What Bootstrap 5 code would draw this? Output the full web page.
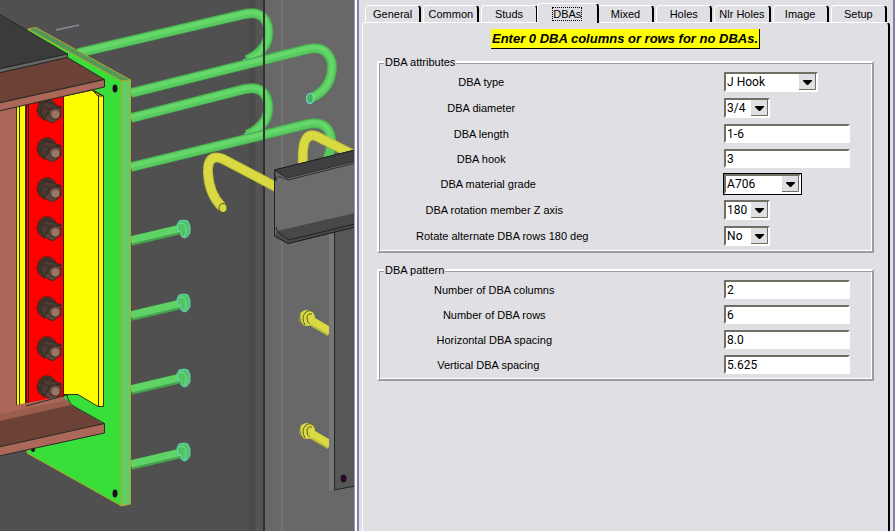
<!DOCTYPE html>
<html lang="en">
<head>
<meta charset="utf-8">
<meta name="viewport" content="width=device-width, initial-scale=1">
<title>DBA connection settings</title>
<link href="https://cdn.jsdelivr.net/npm/bootstrap@5.3.0/dist/css/bootstrap.min.css" rel="stylesheet">
<style>
  :root { --face: #e0dfe3; --shade: #9d9da1; --deep: #716f64; }
  body { background: var(--face); color: #000; font: 11px/14px "Liberation Sans", Arial, sans-serif; }
  .workspace { display: grid; grid-template-columns: 354fr 541fr; }
  .model-view { background: #505050; position: relative; }
  .model-view svg { position: absolute; width: 100%; height: 100%; display: block; }
  .side-panel { border-left: 1px solid #9a9ab4; padding-left: 2px; background: #fff; }
  .panel-body { background: var(--face); border-left: 2px solid #8080a4; border-right: 2px solid #8080a4; padding: 3px 3px 0 3px; }
  .tab-strip { padding: 0 3px; margin-bottom: -1px; gap: 2px; align-items: flex-end; flex-wrap: nowrap; }
  .tab-strip .nav-item { flex: 1 1 0; min-width: 0; }
  .tab-strip .nav-link { width: 100%; height: 18px; padding: 0 0 1px; margin: 0; color: #000; background: var(--face); line-height: 15px; white-space: nowrap;
    border: 1px solid #fff; border-right: 2px solid #000; border-bottom: 0; border-radius: 4px 4px 0 0; }
  .tab-strip .nav-item.current { flex-basis: 6px; margin: 0 -3px; z-index: 1; }
  .tab-strip .nav-link.active { color: #000; background: var(--face); height: 20px; padding: 2px 0 0; border-color: #fff #000 #fff #fff; border-bottom: 0; }
  .tab-strip .active span { outline: 1px dotted #000; display: inline-block; line-height: 12px; }
  .tab-page { border: 1px solid #fff; border-right: 2px solid #000; border-bottom: 0; border-radius: 4px 4px 0 0; padding: 6px 14px 0; }
  .notice-row { margin-bottom: 6px; }
  .notice { background: #ff0; border: solid #000; border-width: 0 1px 1px 0; font: italic bold 13px/19px "Liberation Sans", Arial, sans-serif; padding: 0 1px; }
  .group-frame { border: 2px solid; border-color: #fff var(--shade) var(--shade) #fff; box-shadow: inset 1px 1px var(--shade), inset -1px -1px #fff; padding: 3px 0 5px; margin-bottom: 10px; }
  .group-frame legend { float: none; width: auto; font-size: 11px; line-height: 14px; margin: 0 0 0 5px; padding: 0 1px; background: var(--face); }
  .field-grid { display: grid; grid-template-columns: 50% 20% 30%; row-gap: 6px; align-items: center; }
  .field-grid label { text-align: center; }
  .field-grid .label-short { padding-right: 42px; }
  .field-grid .label-medium { padding-right: 28px; }
  .field-grid .label-long { padding-right: 16px; }
  .field-grid .form-control, .field-grid .form-select { grid-column: 3; min-height: 0; border: 2px solid; border-color: var(--deep) #fff #fff var(--deep); border-radius: 0; color: #000;
    font: 12px/15px Roboto, "Liberation Sans", sans-serif; padding: 0 0 0 1px; background-color: #fff; box-shadow: none; }
  .field-grid .form-control { height: 19px; width: 126px; }
  .field-grid .form-select { height: 20px; width: 46px; padding-right: 17px; background-position: right center; background-size: 17px 16px;
    background-image: url("data:image/svg+xml,%3Csvg xmlns='http://www.w3.org/2000/svg' viewBox='0 0 17 16'%3E%3Cpath fill='%23e0dfe3' d='M0 0h17v16H0z'/%3E%3Cpath fill='none' stroke='%23716f64' d='M0 15.5h16.5V0'/%3E%3Cpath d='M4 6h9v1l-4 4h-1L4 7z'/%3E%3C/svg%3E"); }
  .field-grid .select-hook { width: 94px; }
  .field-grid .select-grade { width: 77px; outline: 1px solid #000; }
</style>
<script src="https://cdn.jsdelivr.net/npm/bootstrap@5.3.0/dist/js/bootstrap.bundle.min.js"></script>
</head>
<body>
<main class="workspace min-vh-100">
  <section class="model-view overflow-hidden" aria-label="3D model">
    <svg viewBox="0 0 354 531" preserveAspectRatio="xMinYMin slice" role="img" aria-label="Embed plate with hooked bars">
      <defs>
        <g id="bolt" stroke="#33261f" stroke-width=".8">
          <path fill="#47372f" d="M-5-12L1-12 6-8 6 6-5 9-10 5-12-1-10-8z"/>
          <path fill="none" d="M-10-5L-6-9 0-10M-10 3L-11-2"/>
          <path fill="#5b463b" d="M-7-5L-3-9 4-7 12-4 12 6 4 12-5 8-8 2z"/>
          <path fill="#4c3a31" d="M-7-5L-3-9 4-7 12-4 4-2-1 3-5 8-8 2z"/>
          <path fill="none" d="M-7-5L0-2 12-4M0-2L-4 8"/>
          <path fill="#806153" d="M2-1L6-3 10-2 12 2 10 7 5 8 1 6 0 2z"/>
          <circle cx="6.500" cy="3.500" r="4.500" fill="#9a7666" stroke-width=".6"/>
        </g>
        <g id="stud-head" fill="#55c45e" stroke="#62e0dc" stroke-width=".8">
          <path d="M-7-4L-5-8 0-9 4-8 6-3 6 4 3 8 0 9-3 7-3 3-6 2z"/>
          <path fill="none" d="M-5-5L-1-6 2-2 2 4 0 8"/>
        </g>
        <g id="anchor" fill="none">
          <path stroke="#bcbc38" stroke-width="9" d="M0 0L24 14"/>
          <ellipse cx="1" cy="0" rx="8" ry="8" fill="#d9d943"/>
          <path stroke="#5d5d30" d="M8-6Q3-9-1-5Q-5 0-1 7M6-4Q1-5 1 0Q1 5 4 6M-6-4Q-7 3-3 7"/>
          <path stroke="#d9d943" stroke-width="7" d="M5 2L24 13"/>
        </g>
      </defs>
      <path fill="#505050" d="M0 0h264v531H0z"/>
      <path fill="#4a4a4a" d="M249 0h6v531h-6z"/><path fill="#545454" d="M256 0h7v531h-7z"/>
      <path fill="#686868" d="M264 0h90v531h-90z"/>
      <path fill="#727272" d="M281 0h2v531h-2z"/>
      <path stroke="#858b99" stroke-width="1.500" d="M56 30L79 25"/>

      <g fill="none">
        <g stroke="#48a94f" stroke-width="10"><path d="M78 53L245 14Q265 10 268 28Q271 49 247 60M131 118L245 89Q265 85 268 103Q271 124 247 135"/></g>
        <g stroke="#58ca5f" stroke-width="8"><path d="M78 53L245 14Q265 10 268 28Q271 49 247 60M131 118L245 89Q265 85 268 103Q271 124 247 135"/></g>
        <g stroke="#65d76b" stroke-width="4"><path d="M78 52L245 13Q265 9 268 28Q271 49 248 60M131 117L245 88Q265 84 268 103Q271 124 248 135"/></g>
        <g stroke="#48a94f" stroke-width="10"><path d="M131 93L308 49Q328 45 332 64Q333 88 311 98M131 167L308 124Q328 120 331 138Q332 150 326 162"/></g>
        <g stroke="#58ca5f" stroke-width="8"><path d="M131 93L308 49Q328 45 332 64Q333 88 311 98M131 167L308 124Q328 120 331 138Q332 150 326 162"/></g>
        <g stroke="#65d76b" stroke-width="4"><path d="M131 92L308 48Q328 44 332 64Q333 88 312 97M131 166L308 123Q328 119 331 138"/></g>
        <ellipse cx="310" cy="98.500" rx="3.500" ry="5" fill="#4faf57" stroke="#62e0dc" stroke-width="1.200"/>
        <path stroke="#62e0dc" d="M243 60l3-1M244 134l3-1"/>
        <g stroke="#46a34d" stroke-width="10"><path d="M131 241L182 229M131 316L182 304M131 390L182 378M131 465L182 453"/></g>
        <g stroke="#60d367" stroke-width="7"><path d="M131 240L182 228M131 315L182 303M131 389L182 377M131 464L182 452"/></g>
      </g>
      <use href="#stud-head" x="184" y="229"/><use href="#stud-head" x="184" y="303"/><use href="#stud-head" x="184" y="378"/><use href="#stud-head" x="184" y="452"/>
      <path fill="#303030" d="M263 0h2v531h-2z"/>

      <g fill="none">
        <path stroke="#bcbc38" stroke-width="10" d="M278 188L223 159Q207 153 208 173Q209 194 222 207M356 156L316 136Q301 131 303 164"/>
        <path stroke="#d9d943" stroke-width="8" d="M278 188L223 159Q207 153 208 173Q209 194 222 207M356 156L316 136Q301 131 303 164"/>
      </g>
      <ellipse cx="223" cy="208" rx="4" ry="4.500" fill="#d9d943" stroke="#55552d"/>
      <use href="#anchor" x="306" y="318"/><use href="#anchor" x="306" y="431"/>
      <path fill="#777" d="M329 233h5v257h-5z"/>
      <path fill="#575757" stroke="#252525" d="M334.500 225V490L355 486V225z"/>
      <ellipse cx="343.500" cy="478.500" rx="3" ry="4" fill="#2b0b2b"/>
      <path fill="#6c6c6c" stroke="#222" d="M274.500 170L355 150V227L288 243.500 274.500 236z"/>
      <path fill="#404040" stroke="#222" d="M274.500 170L355 150V162L288 179.500z"/>
      <path fill="#686868" stroke="#222" stroke-width=".8" d="M276 181Q275 176 281 177L288 180 355 163V161L287 178 274.500 170.500z"/>
      <path fill="#484848" d="M277 231L355 213V226L288 243 275 236z"/>
      <path fill="none" stroke="#222" d="M276 227Q276 232 282 235L289 240 355 224M274.500 236L288 243.500 355 227"/>

      <path fill="#38df38" stroke="#b5a52d" d="M28 29L121.500 81V506L27 453z"/>
      <path fill="#52985a" stroke="#b5a52d" d="M28 29L36 27.500 130.500 80 121.500 81z"/>
      <path fill="#65cb65" stroke="#b5a52d" d="M121.500 81L130.500 80V504L121.500 506z"/>
      <g fill="#210b22"><ellipse cx="115" cy="88.500" rx="2.500" ry="4"/><ellipse cx="115" cy="493.500" rx="2.500" ry="4"/><ellipse cx="33" cy="449" rx="2" ry="3"/></g>

      <path fill="#ab6858" d="M0 106L17 103V420H0z"/>
      <path fill="#fdfd00" stroke="#342f1b" d="M63.500 96L93 90 103.500 96V406.500H98L78 394.500H63.500z"/>
      <path fill="#b9b916" stroke="#342f1b" d="M93 91L103.500 96H98z"/>
      <path fill="none" stroke="#342f1b" d="M98.500 96V406"/>
      <path fill="#fdfd00" stroke="#342f1b" d="M16.500 106L25.500 104V406.500H16.500z"/><path stroke="#342f1b" d="M19.500 106V406"/>
      <path fill="#f00" stroke="#40161a" d="M26.500 104L63.500 96V400L26.500 406.500z"/><path stroke="#40161a" d="M28.500 104V406"/>
      <use href="#bolt" x="49" y="111"/><use href="#bolt" x="49" y="150"/><use href="#bolt" x="49" y="190"/><use href="#bolt" x="49" y="229"/><use href="#bolt" x="49" y="269"/><use href="#bolt" x="49" y="309"/><use href="#bolt" x="49" y="349"/><use href="#bolt" x="49" y="388"/>

      <path fill="#3b3b3b" stroke="#292929" d="M-1 14L67.500 54-1 69z"/>
      <path fill="#666" stroke="#292929" d="M-1 69L67.500 54V57.500L-1 73z"/>
      <path fill="#6c4136" stroke="#292929" d="M-1 73L67.500 57.500 104.500 79.500-1 103z"/>
      <path fill="#ab6858" stroke="#292929" d="M-1 103L104.500 79.500V87L-1 111z"/>
      <path fill="#ab6858" d="M0 408L63 396Q68 402 72 406L0 424z"/>
      <path fill="#9a5d4e" d="M0 414L67 400 72 406 0 424z"/>
      <path fill="#6c4136" d="M0 421L71 405 104 424 0 448z"/>
      <path fill="none" stroke="#292929" d="M26 406L67 395Q68 403 75 407L104.500 423.500"/>
      <path fill="#ab6858" stroke="#292929" d="M-1 447L104.500 423.500V433L-1 456z"/>
    </svg>
  </section>

  <section class="side-panel d-flex">
    <form class="panel-body flex-grow-1 d-flex flex-column">
      <ul class="nav tab-strip">
        <li class="nav-item"><button type="button" class="nav-link">General</button></li>
        <li class="nav-item"><button type="button" class="nav-link">Common</button></li>
        <li class="nav-item"><button type="button" class="nav-link">Studs</button></li>
        <li class="nav-item current"><button type="button" class="nav-link active" aria-current="page"><span>DBAs</span></button></li>
        <li class="nav-item"><button type="button" class="nav-link">Mixed</button></li>
        <li class="nav-item"><button type="button" class="nav-link">Holes</button></li>
        <li class="nav-item"><button type="button" class="nav-link">Nlr Holes</button></li>
        <li class="nav-item"><button type="button" class="nav-link">Image</button></li>
        <li class="nav-item"><button type="button" class="nav-link">Setup</button></li>
      </ul>
      <div class="tab-page flex-grow-1">
        <div class="notice-row d-flex justify-content-center"><span class="notice">Enter 0 DBA columns or rows for no DBAs.</span></div>
        <fieldset class="group-frame">
          <legend>DBA attributes</legend>
          <div class="field-grid">
            <label class="label-short" for="type">DBA type</label>
            <select id="type" class="form-select select-hook"><option>J Hook</option></select>
            <label class="label-short" for="diameter">DBA diameter</label>
            <select id="diameter" class="form-select"><option>3/4</option></select>
            <label class="label-short" for="length">DBA length</label>
            <input id="length" class="form-control" value="1-6">
            <label class="label-short" for="hook">DBA hook</label>
            <input id="hook" class="form-control" value="3">
            <label class="label-medium" for="grade">DBA material grade</label>
            <select id="grade" class="form-select select-grade"><option>A706</option></select>
            <label class="label-long" for="rotation">DBA rotation member Z axis</label>
            <select id="rotation" class="form-select"><option>180</option></select>
            <label for="alternate">Rotate alternate DBA rows 180 deg</label>
            <select id="alternate" class="form-select"><option>No</option></select>
          </div>
        </fieldset>
        <fieldset class="group-frame">
          <legend>DBA pattern</legend>
          <div class="field-grid">
            <label class="label-long" for="columns">Number of DBA columns</label>
            <input id="columns" class="form-control" value="2">
            <label class="label-long" for="rows">Number of DBA rows</label>
            <input id="rows" class="form-control" value="6">
            <label class="label-long" for="horizontal">Horizontal DBA spacing</label>
            <input id="horizontal" class="form-control" value="8.0">
            <label class="label-medium" for="vertical">Vertical DBA spacing</label>
            <input id="vertical" class="form-control" value="5.625">
          </div>
        </fieldset>
      </div>
    </form>
  </section>
</main>
</body>
</html>
